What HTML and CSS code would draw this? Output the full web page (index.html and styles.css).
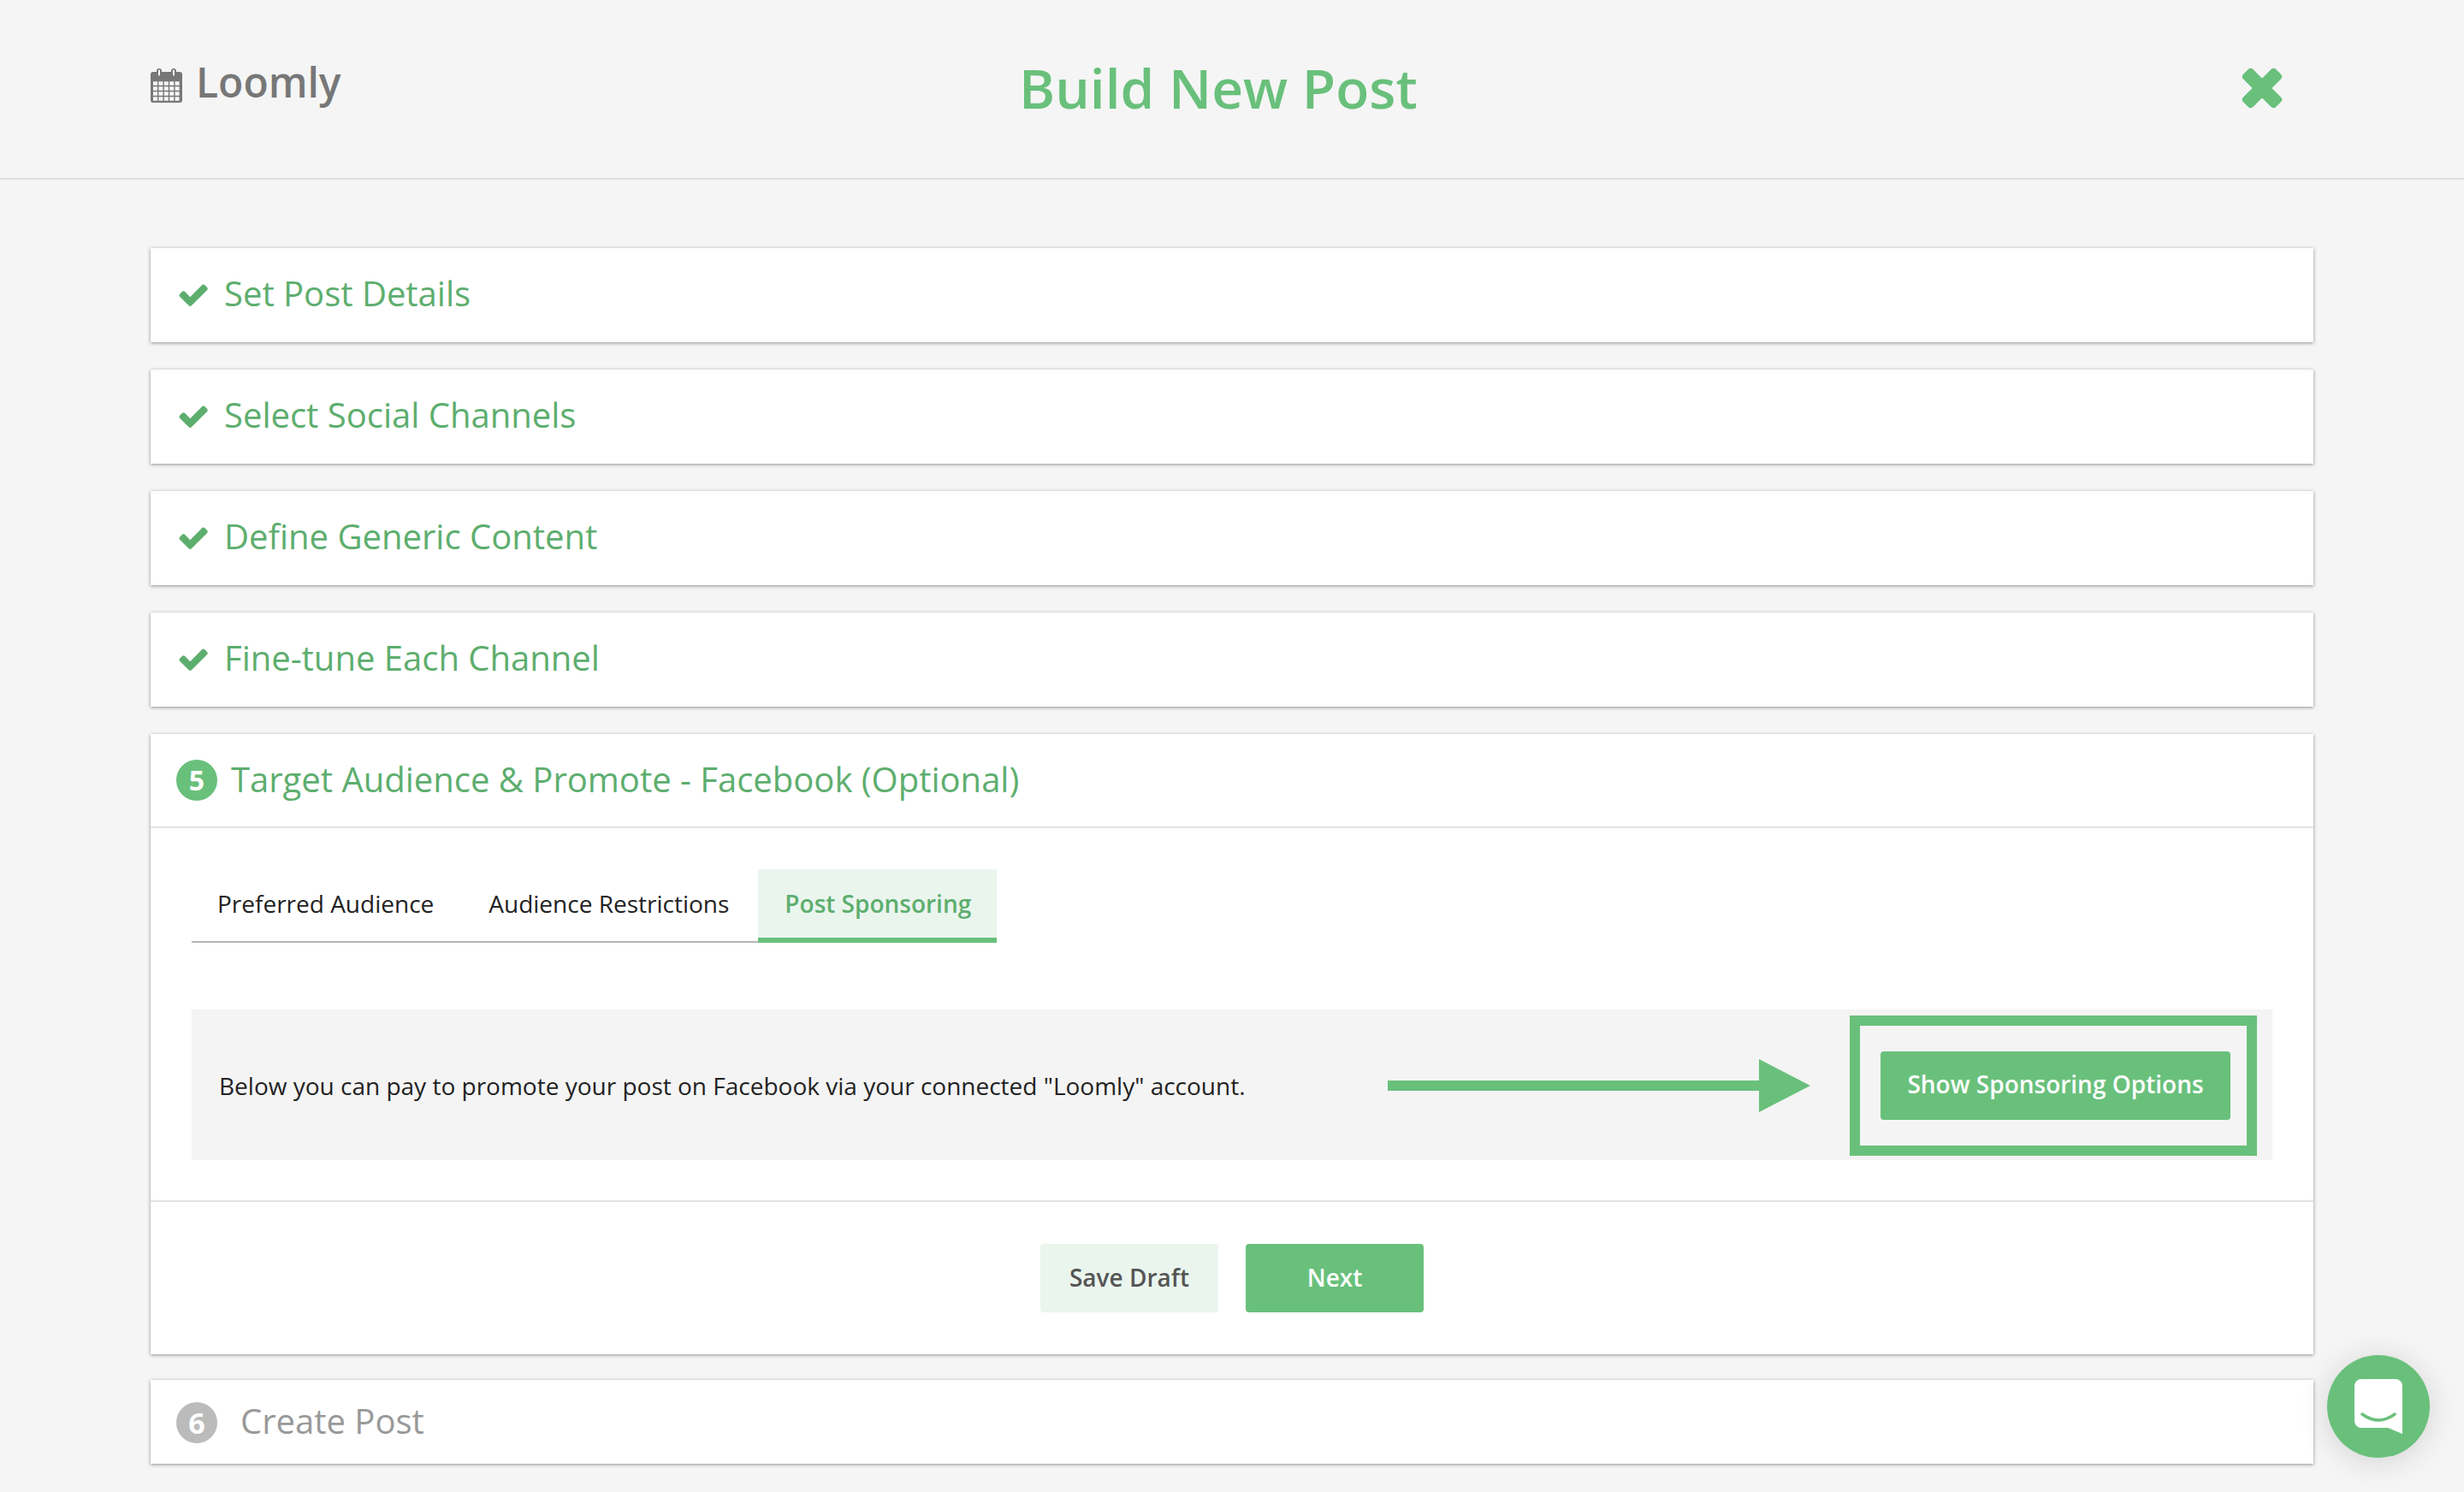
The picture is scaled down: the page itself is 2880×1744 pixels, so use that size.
FILE: index.html
```html
<!DOCTYPE html>
<html lang="en">
<head>
<meta charset="utf-8">
<title>Build New Post</title>
<link rel="stylesheet" href="styles.css">
</head>
<body>
<header class="topbar">
  <div class="brand">
    <svg class="brand-icon" viewBox="0 0 37 40">
      <path class="cal-body" d="M3 4H7V3a3 3 0 0 1 6 0V4H24V3a3 3 0 0 1 6 0V4H34a3 3 0 0 1 3 3V37a3 3 0 0 1-3 3H3a3 3 0 0 1-3-3V7a3 3 0 0 1 3-3z"/>
      <path class="cal-grid" d="M3 17.5H34M3 23.5H34M3 29.5H34M3 35.5H34"/>
      <path class="cal-ring" d="M10 2.5V7.5M27 2.5V7.5"/>
    </svg>
    <span class="brand-name">Loomly</span>
  </div>
  <h1 class="page-title">Build New Post</h1>
  <svg class="close-icon" viewBox="0 0 48 48">
    <rect x="-3" y="16" width="54" height="16" rx="4" transform="rotate(45 24 24)"/>
    <rect x="-3" y="16" width="54" height="16" rx="4" transform="rotate(-45 24 24)"/>
  </svg>
</header>

<main class="steps">
  <section class="card">
    <div class="card-head">
      <svg class="check" viewBox="105 265 1570 1260"><path d="M1671 566q0 40-28 68l-724 724-136 136q-28 28-68 28t-68-28l-136-136-362-362q-28-28-28-68t28-68l136-136q28-28 68-28t68 28l294 295 656-657q28-28 68-28t68 28l136 136q28 28 28 68z"/></svg>
      <h2 class="step-title">Set Post Details</h2>
    </div>
  </section>
  <section class="card">
    <div class="card-head">
      <svg class="check" viewBox="105 265 1570 1260"><path d="M1671 566q0 40-28 68l-724 724-136 136q-28 28-68 28t-68-28l-136-136-362-362q-28-28-28-68t28-68l136-136q28-28 68-28t68 28l294 295 656-657q28-28 68-28t68 28l136 136q28 28 28 68z"/></svg>
      <h2 class="step-title">Select Social Channels</h2>
    </div>
  </section>
  <section class="card">
    <div class="card-head">
      <svg class="check" viewBox="105 265 1570 1260"><path d="M1671 566q0 40-28 68l-724 724-136 136q-28 28-68 28t-68-28l-136-136-362-362q-28-28-28-68t28-68l136-136q28-28 68-28t68 28l294 295 656-657q28-28 68-28t68 28l136 136q28 28 28 68z"/></svg>
      <h2 class="step-title">Define Generic Content</h2>
    </div>
  </section>
  <section class="card">
    <div class="card-head">
      <svg class="check" viewBox="105 265 1570 1260"><path d="M1671 566q0 40-28 68l-724 724-136 136q-28 28-68 28t-68-28l-136-136-362-362q-28-28-28-68t28-68l136-136q28-28 68-28t68 28l294 295 656-657q28-28 68-28t68 28l136 136q28 28 28 68z"/></svg>
      <h2 class="step-title">Fine-tune Each Channel</h2>
    </div>
  </section>

  <section class="card card-open">
    <div class="card-head card-head-open">
      <span class="num">5</span>
      <h2 class="step-title step-title-open">Target Audience &amp; Promote - Facebook (Optional)</h2>
    </div>
    <div class="card-body">
      <nav class="tabs">
        <span class="tab">Preferred Audience</span>
        <span class="tab">Audience Restrictions</span>
        <span class="tab tab-active">Post Sponsoring</span>
      </nav>
      <div class="notice">
        <p class="notice-text">Below you can pay to promote your post on Facebook via your connected "Loomly" account.</p>
        <svg class="arrow" viewBox="0 0 494 62"><path d="M0 25H434V0L494 31L434 62V37H0z"/></svg>
        <div class="highlight">
          <span class="btn btn-primary btn-wide">Show Sponsoring Options</span>
        </div>
      </div>
    </div>
    <div class="card-foot">
      <span class="btn btn-soft">Save Draft</span>
      <span class="btn btn-primary">Next</span>
    </div>
  </section>

  <section class="card card-last">
    <div class="card-head">
      <span class="num num-off">6</span>
      <h2 class="step-title step-title-off">Create Post</h2>
    </div>
  </section>
</main>

<button class="chat" type="button" aria-label="Chat">
  <svg viewBox="0 0 56 64" class="chat-icon">
    <path class="chat-bubble" d="M8 0H48a8 8 0 0 1 8 8V64L39 57H8a8 8 0 0 1-8-8V8a8 8 0 0 1 8-8z"/>
    <path class="chat-smile" d="M9 41Q28 55 47 41"/>
  </svg>
</button>
</body>
</html>
```
FILE: styles.css
```css
* { box-sizing: border-box; }
html, body { margin: 0; padding: 0; }
body {
  width: 2880px;
  height: 1744px;
  overflow: hidden;
  background: #f5f5f5;
  font-family: "Open Sans", "Liberation Sans", sans-serif;
  position: relative;
}

.topbar {
  height: 210px;
  border-bottom: 2px solid #e0e0e0;
  padding: 0 212px 0 176px;
  display: flex;
  align-items: center;
}
.brand {
  width: 1015px;
  display: flex;
  align-items: center;
  gap: 16px;
  margin-top: -16px;
}
.brand-icon { width: 37px; height: 40px; margin-top: 8px; }
.cal-body { fill: #777; }
.cal-grid { stroke: #f5f5f5; stroke-width: 4.5; stroke-dasharray: 5 1.4; fill: none; }
.cal-ring { stroke: #f5f5f5; stroke-width: 2; fill: none; stroke-linecap: round; }
.brand-name { font-size: 48px; font-weight: 600; line-height: 68px; color: #777; }
.page-title {
  margin: 0;
  font-size: 64px;
  font-weight: 600;
  line-height: 88px;
  color: #69c07b;
  margin-top: -2px;
}
.close-icon { width: 48px; height: 48px; margin-left: auto; margin-top: -2px; fill: #69c07b; }

.steps {
  padding: 80px 176px 0;
  display: flex;
  flex-direction: column;
  gap: 32px;
}
.card {
  background: #fff;
  box-shadow: 0 1px 4px rgba(0, 0, 0, .42);
}
.card-open { height: 725px; display: flex; flex-direction: column; }
.card-last { height: 98px; margin-top: -2px; }

.card-head {
  height: 110px;
  padding-left: 33px;
  display: flex;
  align-items: center;
}
.card-last .card-head { height: 98px; padding-left: 30px; }
.card-head-open { border-bottom: 2px solid #e3e3e3; padding-left: 30px; }
.check { width: 34px; height: 27px; margin-top: -2px; fill: #5dae6e; }
.step-title {
  margin: -4px 0 0 19px;
  font-size: 40px;
  font-weight: 400;
  line-height: 56px;
  color: #5dae6e;
}
.step-title-open { margin-left: 16px; margin-top: -3px; }
.step-title-off { margin-left: 27px; margin-top: -2px; color: #999; }
.num {
  width: 48px;
  height: 48px;
  border-radius: 50%;
  background: #69c07b;
  color: #fff;
  font-size: 32px;
  font-weight: 700;
  line-height: 48px;
  text-align: center;
}
.num-off { background: #bbb; margin-top: 2px; font-size: 34px; }

.card-body {
  flex: 1;
  padding: 48px 48px 0;
}
.tabs { display: flex; width: 940px; white-space: nowrap; }
.tab {
  height: 86px;
  padding: 0 34px 5px 30px;
  display: flex;
  align-items: center;
  font-size: 28px;
  color: #222;
  border-bottom: 2px solid #b5b5b5;
}
.tab-active {
  padding: 0 30px 0 31px;
  font-weight: 600;
  color: #5dae6e;
  background: #eaf5ee;
  border-bottom: 6px solid #69c07b;
}
.notice {
  margin-top: 78px;
  height: 176px;
  background: #f4f4f4;
  padding: 0 18px 0 32px;
  display: flex;
  align-items: center;
}
.notice-text { margin: 2px 0 0; font-size: 28px; line-height: 40px; color: #222; }
.arrow { width: 494px; height: 62px; margin-left: auto; margin-top: 2px; fill: #69c07b; }
.highlight {
  width: 476px;
  height: 164px;
  margin: 2px 0 0 46px;
  border: 12px solid #69c07b;
  padding-left: 24px;
  display: flex;
  align-items: center;
}
.btn {
  height: 80px;
  width: 208px;
  border-radius: 4px;
  padding-bottom: 2px;
  display: flex;
  align-items: center;
  justify-content: center;
  font-size: 28px;
  font-weight: 600;
}
.btn-wide { width: 409px; padding-bottom: 4px; }
.btn-primary { background: #69c07b; color: #fff; }
.btn-soft { background: #eaf5ee; color: #555; }
.card-foot {
  height: 180px;
  border-top: 2px solid #e3e3e3;
  display: flex;
  justify-content: center;
  align-items: center;
  gap: 32px;
}

.chat {
  position: absolute;
  left: 2720px;
  top: 1584px;
  width: 120px;
  height: 120px;
  border: 0;
  border-radius: 50%;
  padding: 0;
  background: #69c07b;
  box-shadow: 0 4px 36px rgba(0, 0, 0, .14);
  display: flex;
  align-items: center;
  justify-content: center;
}
.chat-icon { width: 56px; height: 64px; }
.chat-bubble { fill: #fff; }
.chat-smile { fill: none; stroke: #69c07b; stroke-width: 3.5; stroke-linecap: round; }
```
